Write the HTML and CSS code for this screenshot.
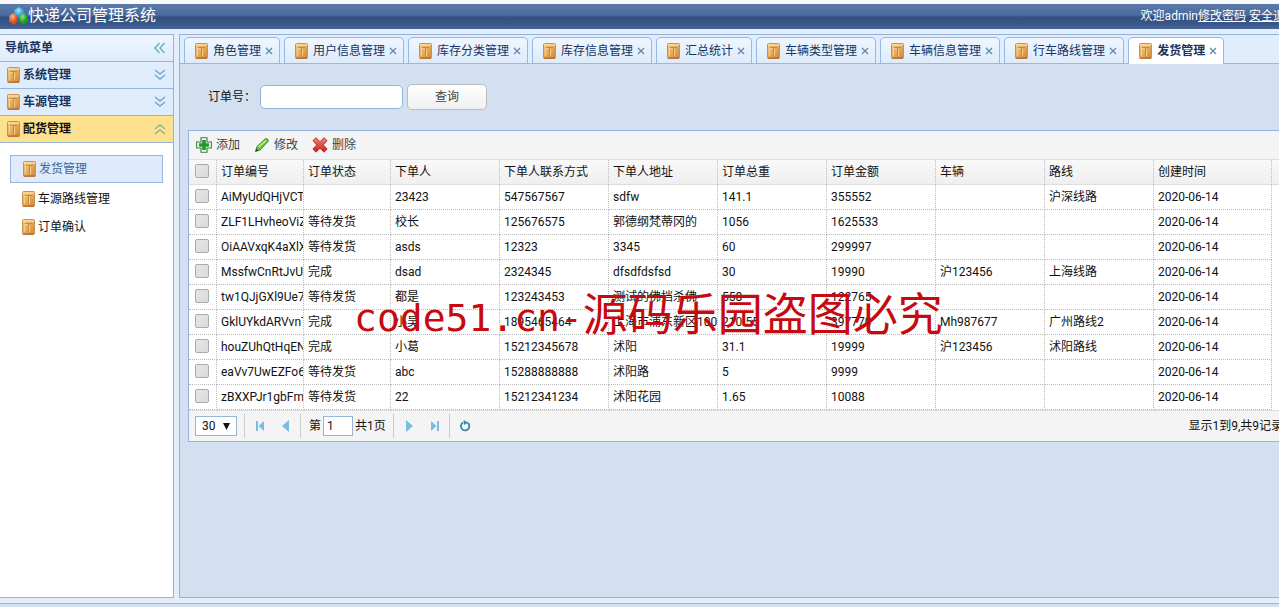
FILE: index.html
```
<!DOCTYPE html>
<html lang="zh-CN">
<head>
<meta charset="utf-8">
<title>快递公司管理系统</title>
<link rel="stylesheet" href="styles.css">
</head>
<body>
<svg class="defs" aria-hidden="true">
  <defs>
    <linearGradient id="wood" x1="0" y1="0" x2="1" y2="1">
      <stop offset="0" stop-color="#f6cb84"/><stop offset=".5" stop-color="#e6ab5a"/><stop offset="1" stop-color="#cc8638"/>
    </linearGradient>
    <radialGradient id="ballBlue" cx=".4" cy=".3"><stop offset="0" stop-color="#9fe4fa"/><stop offset="1" stop-color="#1f97d0"/></radialGradient>
    <radialGradient id="ballOrange" cx=".4" cy=".3"><stop offset="0" stop-color="#ffb284"/><stop offset="1" stop-color="#dd4a1c"/></radialGradient>
    <radialGradient id="ballGreen" cx=".4" cy=".3"><stop offset="0" stop-color="#96e46c"/><stop offset="1" stop-color="#129a2a"/></radialGradient>
    <linearGradient id="redx" x1="0" y1="0" x2="0" y2="1"><stop offset="0" stop-color="#f08a80"/><stop offset="1" stop-color="#cc1a14"/></linearGradient>
    <symbol id="box" viewBox="0 0 13 16">
      <rect x=".5" y=".5" width="12" height="15" rx="1" fill="url(#wood)" stroke="#c8924e"/>
      <path d="M1 1h11v2H1z" fill="#fbe0a6" opacity=".7"/>
      <path d="M1 15h11" stroke="#a4603a"/>
      <path d="M3 4.500h7M6.500 5v8" stroke="#c98a40" fill="none"/>
      <path d="M3 5.500h3M7.500 6v7M2.500 5v8" stroke="#f3cd8a" fill="none"/>
    </symbol>
    <symbol id="down" viewBox="0 0 12 12"><path d="M1 1l5 4 5-4M1 6l5 4 5-4" fill="none" stroke="#6ba9d4" stroke-width="1.5"/></symbol>
    <symbol id="up" viewBox="0 0 12 12"><path d="M1 6l5-4 5 4M1 11l5-4 5 4" fill="none" stroke="#8db09c" stroke-width="1.5"/></symbol>
    <symbol id="left" viewBox="0 0 12 12"><path d="M5.500 1L1 6l4.500 5M10.500 1L6 6l4.500 5" fill="none" stroke="#67b2c8" stroke-width="1.5"/></symbol>
    <symbol id="close" viewBox="0 0 8 8"><path d="M1 1l6 6M7 1L1 7" stroke="#5c86ad" stroke-width="1.2"/></symbol>
  </defs>
</svg>

<div class="page">
  <header class="topbar">
    <div class="brand">
      <svg class="logo" viewBox="0 0 20 18" aria-hidden="true">
        <path d="M6 3l5-3 5 3 1 5-5 4-6-3z" fill="url(#ballBlue)"/>
        <path d="M1 9l4-3 5 3v5l-4 4-5-3z" fill="url(#ballOrange)"/>
        <path d="M11 9l5-3 4 4v5l-5 3-4-3z" fill="url(#ballGreen)"/>
      </svg>
      <h1>快递公司管理系统</h1>
    </div>
    <p class="user">欢迎admin<a href="#">修改密码</a> <a href="#">安全退出</a></p>
  </header>

  <div class="layout">
    <aside class="sidebar">
      <div class="side-head"><span>导航菜单</span><svg class="arrow"><use href="#left"/></svg></div>
      <button class="side-head" type="button"><svg class="box"><use href="#box"/></svg><span>系统管理</span><svg class="arrow"><use href="#down"/></svg></button>
      <button class="side-head" type="button"><svg class="box"><use href="#box"/></svg><span>车源管理</span><svg class="arrow"><use href="#down"/></svg></button>
      <button class="side-head open" type="button"><svg class="box"><use href="#box"/></svg><span>配货管理</span><svg class="arrow"><use href="#up"/></svg></button>
      <ul class="menu">
        <li><a class="selected" href="#"><svg class="box"><use href="#box"/></svg>发货管理</a></li>
        <li><a href="#"><svg class="box"><use href="#box"/></svg>车源路线管理</a></li>
        <li><a href="#"><svg class="box"><use href="#box"/></svg>订单确认</a></li>
      </ul>
    </aside>

    <main class="main">
      <ul class="tabs">
        <li><svg class="box"><use href="#box"/></svg><a href="#">角色管理</a><button type="button" aria-label="关闭"><svg><use href="#close"/></svg></button></li>
        <li><svg class="box"><use href="#box"/></svg><a href="#">用户信息管理</a><button type="button" aria-label="关闭"><svg><use href="#close"/></svg></button></li>
        <li><svg class="box"><use href="#box"/></svg><a href="#">库存分类管理</a><button type="button" aria-label="关闭"><svg><use href="#close"/></svg></button></li>
        <li><svg class="box"><use href="#box"/></svg><a href="#">库存信息管理</a><button type="button" aria-label="关闭"><svg><use href="#close"/></svg></button></li>
        <li><svg class="box"><use href="#box"/></svg><a href="#">汇总统计</a><button type="button" aria-label="关闭"><svg><use href="#close"/></svg></button></li>
        <li><svg class="box"><use href="#box"/></svg><a href="#">车辆类型管理</a><button type="button" aria-label="关闭"><svg><use href="#close"/></svg></button></li>
        <li><svg class="box"><use href="#box"/></svg><a href="#">车辆信息管理</a><button type="button" aria-label="关闭"><svg><use href="#close"/></svg></button></li>
        <li><svg class="box"><use href="#box"/></svg><a href="#">行车路线管理</a><button type="button" aria-label="关闭"><svg><use href="#close"/></svg></button></li>
        <li class="active"><svg class="box"><use href="#box"/></svg><a href="#">发货管理</a><button type="button" aria-label="关闭"><svg><use href="#close"/></svg></button></li>
      </ul>

      <div class="content">
        <form class="search">
          <label for="order">订单号：</label>
          <input id="order" type="text">
          <button type="button">查询</button>
        </form>

        <section class="grid">
          <div class="toolbar">
            <button type="button"><svg viewBox="0 0 16 16"><path d="M5 .7h6V5h4.300v6H11v4.300H5V11H.7V5H5z" fill="#fff" stroke="#2f7f3c" stroke-width="1.1"/><path d="M6.200 3h3.600v3.200H13v3.600H9.800V13H6.200V9.800H3V6.200h3.200z" fill="#1c9a2a"/></svg>添加</button>
            <button type="button"><svg viewBox="0 0 16 16"><path d="M1.500 14.500l1.500-5L11 2q1.500-1 2.500 0t.5 2.500l-8 8.500z" fill="#6cc43c" stroke="#3a8a28"/><path d="M4.500 10L12 3.500" stroke="#c4f09a" stroke-width="1.500"/><path d="M1.500 14.500l1-3 2 2z" fill="#2d4a28"/></svg>修改</button>
            <button type="button"><svg viewBox="0 0 16 16"><path d="M1 3.500L4 .8l4 4 4-4 3 2.700L11.200 8l4 4-3.200 3.200-4-4-4 4L.8 12l4-4z" fill="url(#redx)" stroke="#b3302a"/></svg>删除</button>
          </div>
          <table>
            <colgroup><col class="c-check"><col class="c-short"><col class="c-short"><col class="c-mid"><col class="c-mid"><col class="c-mid"><col class="c-mid"><col class="c-mid"><col class="c-mid"><col class="c-mid"><col class="c-date"><col></colgroup>
            <thead>
              <tr><th><input type="checkbox" aria-label="全选"></th><th>订单编号</th><th>订单状态</th><th>下单人</th><th>下单人联系方式</th><th>下单人地址</th><th>订单总重</th><th>订单金额</th><th>车辆</th><th>路线</th><th>创建时间</th><th></th></tr>
            </thead>
            <tbody>
              <tr><td><input type="checkbox" aria-label="选择"></td><td>AiMyUdQHjVCTw</td><td></td><td>23423</td><td>547567567</td><td>sdfw</td><td>141.1</td><td>355552</td><td></td><td>沪深线路</td><td>2020-06-14</td><td></td></tr>
              <tr><td><input type="checkbox" aria-label="选择"></td><td>ZLF1LHvheoViZ</td><td>等待发货</td><td>校长</td><td>125676575</td><td>郭德纲梵蒂冈的</td><td>1056</td><td>1625533</td><td></td><td></td><td>2020-06-14</td><td></td></tr>
              <tr><td><input type="checkbox" aria-label="选择"></td><td>OiAAVxqK4aXlX</td><td>等待发货</td><td>asds</td><td>12323</td><td>3345</td><td>60</td><td>299997</td><td></td><td></td><td>2020-06-14</td><td></td></tr>
              <tr><td><input type="checkbox" aria-label="选择"></td><td>MssfwCnRtJvUx</td><td>完成</td><td>dsad</td><td>2324345</td><td>dfsdfdsfsd</td><td>30</td><td>19990</td><td>沪123456</td><td>上海线路</td><td>2020-06-14</td><td></td></tr>
              <tr><td><input type="checkbox" aria-label="选择"></td><td>tw1QJjGXl9Ue7</td><td>等待发货</td><td>都是</td><td>123243453</td><td>测试的佛挡杀佛</td><td>558</td><td>122765</td><td></td><td></td><td>2020-06-14</td><td></td></tr>
              <tr><td><input type="checkbox" aria-label="选择"></td><td>GklUYkdARVvnT</td><td>完成</td><td>小吴</td><td>1895465464</td><td>上海市浦东新区100</td><td>210.55</td><td>397770</td><td>Mh987677</td><td>广州路线2</td><td>2020-06-14</td><td></td></tr>
              <tr><td><input type="checkbox" aria-label="选择"></td><td>houZUhQtHqEN</td><td>完成</td><td>小葛</td><td>15212345678</td><td>沭阳</td><td>31.1</td><td>19999</td><td>沪123456</td><td>沭阳路线</td><td>2020-06-14</td><td></td></tr>
              <tr><td><input type="checkbox" aria-label="选择"></td><td>eaVv7UwEZFo6</td><td>等待发货</td><td>abc</td><td>15288888888</td><td>沭阳路</td><td>5</td><td>9999</td><td></td><td></td><td>2020-06-14</td><td></td></tr>
              <tr><td><input type="checkbox" aria-label="选择"></td><td>zBXXPJr1gbFm8</td><td>等待发货</td><td>22</td><td>15212341234</td><td>沭阳花园</td><td>1.65</td><td>10088</td><td></td><td></td><td>2020-06-14</td><td></td></tr>
            </tbody>
          </table>
          <div class="pager">
            <span class="size"><select aria-label="每页条数"><option>30</option></select><svg viewBox="0 0 7 7"><path d="M0 0h7L3.500 7z" fill="#111"/></svg></span>
            <span class="nav">
              <button type="button" aria-label="首页"><svg viewBox="0 0 12 12"><path d="M2 1h2v10H2zM10 1v10L4.500 6z" fill="#79bce4"/></svg></button>
              <button type="button" aria-label="上一页"><svg viewBox="0 0 12 12"><path d="M9 0v12L2 6z" fill="#79bce4"/></svg></button>
            </span>
            <span class="pages"><label for="pg">第</label><input id="pg" type="text" value="1"><span>共1页</span></span>
            <span class="nav">
              <button type="button" aria-label="下一页"><svg viewBox="0 0 12 12"><path d="M3 0v12l7-6z" fill="#79bce4"/></svg></button>
              <button type="button" aria-label="末页"><svg viewBox="0 0 12 12"><path d="M8 1h2v10H8zM2 1v10l5.500-5z" fill="#79bce4"/></svg></button>
            </span>
            <span class="nav">
              <button type="button" aria-label="刷新"><svg viewBox="0 0 12 12"><path d="M4 2.500A4.200 4.200 0 1 0 8.500 2.700" fill="none" stroke="#3388ad" stroke-width="1.800"/><path d="M4.500 0l4.500 2.500L5 5z" fill="#3388ad"/></svg></button>
            </span>
            <p class="info">显示1到9,共9记录</p>
          </div>
        </section>
      </div>
    </main>
  </div>
  <footer class="bottom"></footer>
</div>
<div class="watermark"><span>code51.cn-</span>源码乐园盗图必究</div>
</body>
</html>
```

FILE: styles.css
```
* { box-sizing: border-box; }

body {
  margin: 0;
  overflow: hidden;
  background: #e4eefb;
  color: #111;
  font: 12px/16px Roboto, "Noto Sans CJK SC", sans-serif;
}

button, input, select { font: inherit; color: inherit; margin: 0; padding: 0; }
button { border: 0; background: none; text-align: left; }
ul { list-style: none; margin: 0; padding: 0; }
h1, p { margin: 0; }
a { color: inherit; text-decoration: none; }
svg { display: block; flex: none; }

.defs { position: absolute; width: 0; height: 0; }

/* the page runs a little past the right edge of the window */
.page {
  display: flex;
  flex-direction: column;
  width: calc(100% + 20px);
  height: 100vh;
}

.topbar {
  display: flex;
  justify-content: space-between;
  align-items: center;
  height: 29px;
  padding: 0 2px 2px 8px;
  border-top: 4px solid #f8fafc;
  background: linear-gradient(#5c7aa9, #4a6a9e 45%, #33517f 52%, #385788 80%, #48669a);
  color: #fff;
}
.brand { display: flex; align-items: center; }
.logo { width: 20px; height: 18px; }
.brand h1 { font-size: 16px; font-weight: 400; line-height: 20px; }
.user a { text-decoration: underline; }

.layout {
  display: flex;
  gap: 5px;
  flex: 1;
  min-height: 0;
  padding: 5px 0;
}

.sidebar {
  flex: none;
  width: 174px;
  border: 1px solid #99b5d6;
  border-left: 0;
  background: #fff;
}
.side-head {
  display: flex;
  align-items: center;
  gap: 3px;
  width: 100%;
  height: 27px;
  padding: 0 7px;
  border-bottom: 1px solid #99b5d6;
  background: #dfecfc;
  color: #16345f;
  font-weight: 700;
}
div.side-head { padding-left: 5px; background: linear-gradient(#eef5ff, #dfecfc); }
.side-head.open { background: #fde18f; color: #111; }
.box { width: 13px; height: 16px; }
.arrow { width: 12px; height: 12px; margin-left: auto; }

.menu { padding: 12px 10px; }
.menu a {
  display: flex;
  align-items: center;
  gap: 3px;
  height: 28px;
  padding-left: 12px;
}
.menu .selected {
  margin-bottom: 2px;
  border: 1px solid #99b5e0;
  background: #dfeafc;
  color: #3c6796;
}

.main {
  display: flex;
  flex-direction: column;
  flex: 1;
  min-width: 0;
  border: 1px solid #95b3df;
  background: #d3e0f1;
}
.tabs {
  display: flex;
  gap: 4px;
  height: 29px;
  padding: 2px 4px 0;
  border-bottom: 1px solid #95b8e7;
  background: #e0edfd;
}
.tabs li {
  display: flex;
  align-items: center;
  flex: none;
  height: 26px;
  padding: 0 6px 0 10px;
  border: 1px solid #95b8e7;
  border-bottom: 0;
  border-radius: 5px 5px 0 0;
  background: linear-gradient(#eff6ff, #deebfb);
  color: #16345f;
}
.tabs .active { height: 27px; background: #fff; font-weight: 700; }
.tabs a { margin: 0 4px 0 5px; }
.tabs button svg { width: 8px; height: 8px; }

.content { flex: 1; padding: 20px 0 0 8px; }

.search { display: flex; align-items: center; padding-left: 20px; }
.search label { width: 52px; }
.search input {
  width: 143px;
  height: 24px;
  padding: 0 4px;
  border: 1px solid #94b4d6;
  border-radius: 5px;
  background: #fff;
}
.search button {
  width: 80px;
  height: 26px;
  margin-left: 4px;
  border: 1px solid #bbb;
  border-radius: 5px;
  background: linear-gradient(#fff, #f0f0f0);
  color: #444;
  text-align: center;
}

.grid {
  margin-top: 20px;
  border: 1px solid #95b3df;
  background: #fff;
}
.toolbar {
  display: flex;
  gap: 14px;
  height: 29px;
  padding: 0 7px;
  border-bottom: 1px solid #ddd;
  background: #f4f4f4;
}
.toolbar button { display: flex; align-items: center; gap: 4px; color: #444; }
.toolbar svg { width: 16px; height: 16px; }

table { width: 100%; table-layout: fixed; border-spacing: 0; }
.c-check { width: 28px; }
.c-short { width: 87px; }
.c-mid { width: 109px; }
.c-date { width: 118px; }
th, td {
  height: 25px;
  padding: 0 0 0 4px;
  border-right: 1px dotted #bbb;
  border-bottom: 1px dotted #bbb;
  overflow: hidden;
  font-weight: 400;
  text-align: left;
  white-space: nowrap;
}
th { border-bottom: 1px solid #ddd; background: linear-gradient(#f9f9f9, #efefef); }
th:first-child, td:first-child { padding: 0 6px 2px; }
th:last-child, td:last-child { border-right: 0; }
td:last-child { border-bottom: 0; }
table input {
  display: block;
  appearance: none;
  width: 14px;
  height: 14px;
  border: 1px solid #aaa;
  border-radius: 2px;
  background: linear-gradient(135deg, #e6e6e6, #dadada);
}

.pager {
  display: flex;
  align-items: center;
  height: 31px;
  padding: 0 14px 0 6px;
  border-top: 1px solid #ddd;
  background: #f4f4f4;
}
.size { display: grid; align-items: center; width: 42px; margin-right: 7px; }
.size select, .size svg { grid-area: 1 / 1; }
.size select {
  appearance: none;
  height: 20px;
  padding-left: 6px;
  border: 1px solid #95b8d7;
  border-radius: 0;
  background: #fff;
}
.size svg { width: 7px; height: 7px; margin-left: 28px; pointer-events: none; }
.nav, .pages { display: flex; align-items: center; height: 24px; border-left: 1px solid #ccc; }
.nav { gap: 14px; padding: 0 8px 0 9px; }
.nav svg { width: 12px; height: 12px; }
.pages { padding: 0 7px 0 8px; }
.pages input {
  width: 30px;
  height: 20px;
  margin: 0 2px;
  padding: 0 3px;
  border: 1px solid #95b8d7;
  background: #fff;
}
.info { margin-left: auto; }

.bottom { height: 4px; border-top: 1px solid #95b3df; background: #d3e0f1; }

.watermark {
  position: absolute;
  top: 286px;
  left: 354px;
  color: #c60a10;
  font-size: 45px;
  line-height: 60px;
  white-space: nowrap;
  pointer-events: none;
}
.watermark span { font-family: "DejaVu Sans Mono", monospace; font-size: 38px; }
```
